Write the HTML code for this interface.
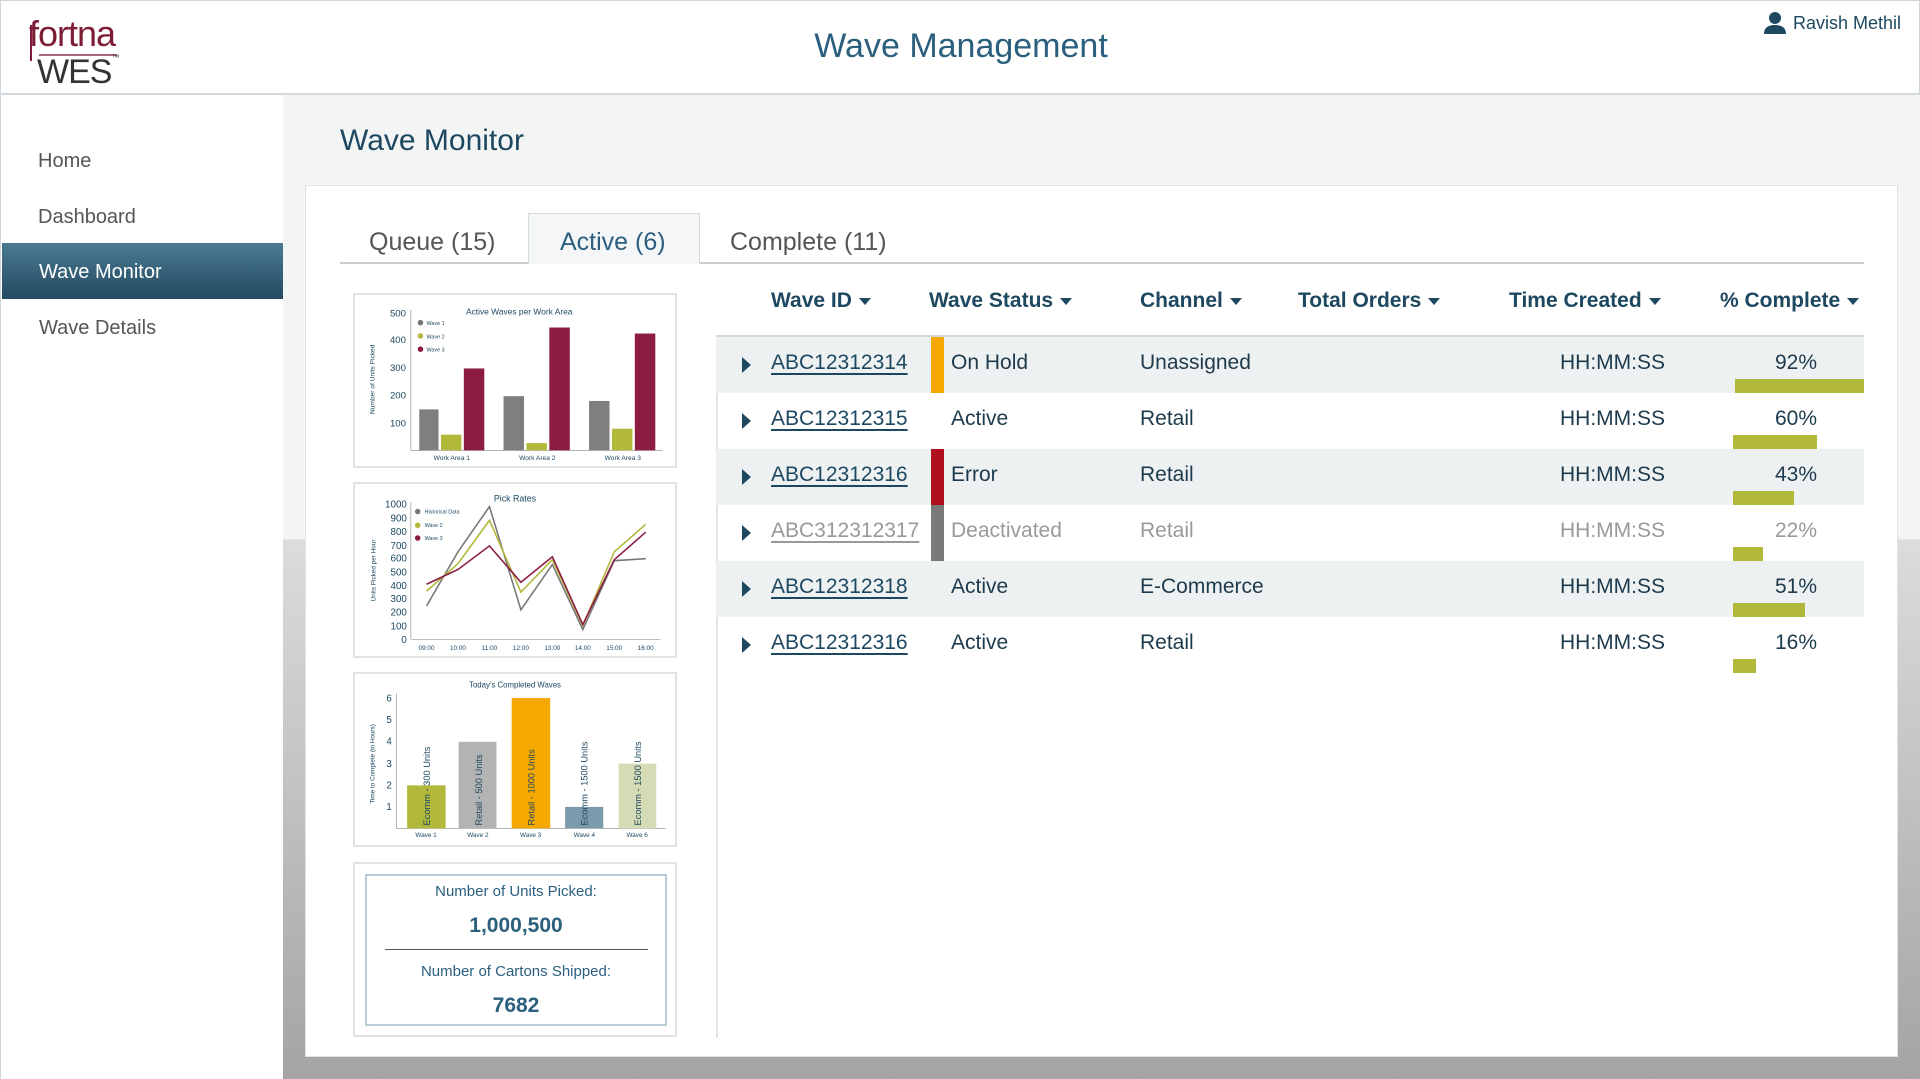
<!DOCTYPE html>
<html><head><meta charset="utf-8"><style>
*{margin:0;padding:0;box-sizing:border-box}
body{width:1920px;height:1079px;position:relative;overflow:hidden;font-family:"Liberation Sans",sans-serif;background:#fff}
.abs{position:absolute}
#header{left:0;top:0;width:1920px;height:95px;background:#fff;border:1px solid #d0d6da;border-bottom:2px solid #d3dadf}
#main{left:283px;top:95px;width:1637px;height:984px;background:linear-gradient(#f3f4f4 0,#f3f4f4 444px,#dcdcdc 445px,#a4a4a4 984px)}
#side{left:0;top:95px;width:283px;height:984px;background:#fff;border-left:1px solid #d0d6da}
.nav{position:absolute;left:37px;font-size:20px;color:#555}
#card{left:305px;top:185px;width:1593px;height:872px;background:#fff;border:1px solid #e0e4e6}
.tab{position:absolute;top:228px;font-size:25px;color:#555}
.th{position:absolute;top:289px;font-size:21px;font-weight:bold;color:#1d4860}
.th:after{content:"";display:inline-block;margin-left:7px;vertical-align:middle;border-left:6px solid transparent;border-right:6px solid transparent;border-top:7px solid #1d4860}
.row{position:absolute;left:716px;width:1148px;height:56px}
.c{position:absolute;font-size:21px;color:#1d3a4c;top:14px}
.id{text-decoration:underline;text-underline-offset:4px;color:#1d4860}
.arr{position:absolute;left:26px;top:20px;border-top:8px solid transparent;border-bottom:8px solid transparent;border-left:9px solid #1d4860}
.bar{position:absolute;background:#b2b839;height:14px;bottom:0}
.box{position:absolute;left:353px;width:324px;background:#fff;border:2px solid #dfe3e5}
svg text{font-family:"Liberation Sans",sans-serif}
</style></head><body>
<div id="header" class="abs">
 <div class="abs" style="left:28px;top:12px;font-size:36px;color:#7d1c34;letter-spacing:-1px">fortna</div>
 <div class="abs" style="left:38px;top:53px;width:78px;height:2px;background:#a5677a"></div>
 <div class="abs" style="left:36px;top:52px;font-size:34px;color:#333;letter-spacing:-1px">WES<span style="font-size:8px;vertical-align:top">™</span></div>
 <div class="abs" style="left:29px;top:24px;width:2px;height:36px;background:#7d1c34"></div>
 <div class="abs" style="left:0;width:1920px;top:26px;text-align:center;font-size:34px;color:#2b5f7e">Wave Management</div>
 <svg class="abs" style="left:1762px;top:10px" width="24" height="24" viewBox="0 0 24 24"><circle cx="12" cy="7" r="6" fill="#1d4860"/><path d="M1 23 Q1 14 12 14 Q23 14 23 23Z" fill="#1d4860"/></svg>
 <div class="abs" style="left:1792px;top:12px;font-size:18px;color:#1d4860">Ravish Methil</div>
</div>
<div id="main" class="abs"></div>
<div id="side" class="abs">
 <div class="nav" style="top:55px">Home</div>
 <div class="nav" style="top:111px">Dashboard</div>
 <div class="abs" style="left:1px;top:148px;width:281px;height:56px;background:linear-gradient(#4a7a92,#234a60)"></div>
 <div class="nav" style="top:166px;color:#fff;left:38px">Wave Monitor</div>
 <div class="nav" style="top:222px;left:38px">Wave Details</div>
</div>
<div class="abs" style="left:340px;top:124px;font-size:30px;color:#1d4860">Wave Monitor</div>
<div id="card" class="abs"></div>
<div class="abs" style="left:340px;top:262px;width:1524px;height:2px;background:#c9ced1"></div>
<div class="abs" style="left:528px;top:213px;width:172px;height:51px;background:#f4f6f7;border:1px solid #d6dbde;border-bottom:none"></div>
<div class="tab" style="left:369px">Queue (15)</div>
<div class="tab" style="left:560px;color:#2b5f7e">Active (6)</div>
<div class="tab" style="left:730px">Complete (11)</div>

<div class="box" style="top:293px;height:175px">
<svg width="320" height="171" viewBox="0 0 265 142">
<text x="136" y="16" font-size="7" fill="#1d4860" text-anchor="middle">Active Waves per Work Area</text>
<g font-size="8" fill="#1d4860" text-anchor="end"><text x="42" y="18">500</text><text x="42" y="40">400</text><text x="42" y="63">300</text><text x="42" y="86">200</text><text x="42" y="109">100</text></g>
<text transform="translate(16,70) rotate(-90)" font-size="5.5" fill="#1d4860" text-anchor="middle">Number of Units Picked</text>
<line x1="46" y1="12" x2="46" y2="129" stroke="#999" stroke-width=".6"/><line x1="46" y1="129" x2="255" y2="129" stroke="#999" stroke-width=".6"/>
<circle cx="54" cy="23" r="2.3" fill="#777"/><circle cx="54" cy="34" r="2.3" fill="#b2b839"/><circle cx="54" cy="45" r="2.3" fill="#8b1c42"/>
<g font-size="4.5" fill="#1d4860"><text x="59" y="25">Wave 1</text><text x="59" y="36">Wave 2</text><text x="59" y="47">Wave 3</text></g>
<g fill="#7f7f7f"><rect x="53" y="95" width="16" height="34"/><rect x="123" y="84" width="17" height="45"/><rect x="194" y="88" width="17" height="41"/></g>
<g fill="#b2b839"><rect x="71" y="116" width="17" height="13"/><rect x="142" y="123" width="17" height="6"/><rect x="213" y="111" width="17" height="18"/></g>
<g fill="#8b1c42"><rect x="90" y="61" width="17" height="68"/><rect x="161" y="27" width="17" height="102"/><rect x="232" y="32" width="17" height="97"/></g>
<g font-size="5.5" fill="#1d4860" text-anchor="middle"><text x="80" y="137">Work Area 1</text><text x="151" y="137">Work Area 2</text><text x="222" y="137">Work Area 3</text></g>
</svg></div>

<div class="box" style="top:482px;height:176px">
<svg width="320" height="172" viewBox="0 0 324 175">
<text x="162" y="18" font-size="9" fill="#1d4860" text-anchor="middle">Pick Rates</text>
<g font-size="10" fill="#1d4860" text-anchor="end"><text x="52" y="24">1000</text><text x="52" y="38">900</text><text x="52" y="52">800</text><text x="52" y="66">700</text><text x="52" y="79">600</text><text x="52" y="93">500</text><text x="52" y="107">400</text><text x="52" y="120">300</text><text x="52" y="134">200</text><text x="52" y="148">100</text><text x="52" y="162">0</text></g>
<text transform="translate(20,88) rotate(-90)" font-size="6.5" fill="#1d4860" text-anchor="middle">Units Picked per Hour</text>
<line x1="56" y1="18" x2="56" y2="158" stroke="#999" stroke-width=".7"/><line x1="56" y1="158" x2="310" y2="158" stroke="#999" stroke-width=".7"/>
<g font-size="6.5" fill="#1d4860" text-anchor="middle"><text x="72" y="169">09:00</text><text x="104" y="169">10:00</text><text x="136" y="169">11:00</text><text x="168" y="169">12:00</text><text x="200" y="169">13:00</text><text x="231" y="169">14:00</text><text x="263" y="169">15:00</text><text x="295" y="169">16:00</text></g>
<polyline fill="none" stroke="#777" stroke-width="1.6" points="72,124 104,69 136,23 168,128 200,82 231,148 263,78 295,76"/>
<polyline fill="none" stroke="#b2b839" stroke-width="1.6" points="72,109 104,81 136,37 168,110 200,77 231,144 263,69 295,41"/>
<polyline fill="none" stroke="#8b1c42" stroke-width="1.6" points="72,102 104,87 136,63 168,100 200,74 231,143 263,77 295,49"/>
<circle cx="63" cy="28" r="2.8" fill="#777"/><circle cx="63" cy="42" r="2.8" fill="#b2b839"/><circle cx="63" cy="55" r="2.8" fill="#8b1c42"/>
<g font-size="5.5" fill="#1d4860"><text x="70" y="30">Historical Data</text><text x="70" y="44">Wave 2</text><text x="70" y="57">Wave 3</text></g>
</svg></div>

<div class="box" style="top:672px;height:175px">
<svg width="320" height="171" viewBox="0 0 324 175">
<text x="162" y="14" font-size="8" fill="#1d4860" text-anchor="middle">Today’s Completed Waves</text>
<g font-size="10" fill="#1d4860" text-anchor="end"><text x="36" y="28">6</text><text x="36" y="50">5</text><text x="36" y="72">4</text><text x="36" y="95">3</text><text x="36" y="117">2</text><text x="36" y="139">1</text></g>
<text transform="translate(18,92) rotate(-90)" font-size="6.5" fill="#1d4860" text-anchor="middle">Time to Complete (in Hours)</text>
<line x1="40.6" y1="20" x2="40.6" y2="158" stroke="#999" stroke-width=".7"/><line x1="40.6" y1="158" x2="316" y2="158" stroke="#999" stroke-width=".7"/>
<rect x="51.6" y="114" width="39.4" height="44" fill="#b2b839"/>
<rect x="104.3" y="69.4" width="38.7" height="88.6" fill="#b3b3b3"/>
<rect x="158.6" y="24.6" width="39.4" height="133.4" fill="#f5a800"/>
<rect x="213.3" y="136" width="39" height="22" fill="#7b9aab"/>
<rect x="268" y="91.7" width="38.6" height="66.3" fill="#d5dbb5"/>
<g font-size="9.5" fill="#1d4860">
<text transform="translate(75,155) rotate(-90)">Ecomm - 300 Units</text>
<text transform="translate(128,155) rotate(-90)">Retail - 500 Units</text>
<text transform="translate(182,155) rotate(-90)">Retail - 1000 Units</text>
<text transform="translate(236,155) rotate(-90)">Ecomm - 1500 Units</text>
<text transform="translate(291,155) rotate(-90)">Ecomm - 1500 Units</text></g>
<g font-size="6.5" fill="#1d4860" text-anchor="middle"><text x="71" y="167">Wave 1</text><text x="124" y="167">Wave 2</text><text x="178" y="167">Wave 3</text><text x="233" y="167">Wave 4</text><text x="287" y="167">Wave 6</text></g>
</svg></div>

<div class="box" style="top:862px;height:175px">
 <div class="abs" style="left:10px;top:10px;width:302px;height:152px;border:2px solid #b6cdd9;text-align:center;color:#2b5f7e">
  <div style="font-size:15px;margin-top:7px">Number of Units Picked:</div>
  <div style="font-size:21px;font-weight:bold;margin-top:14px">1,000,500</div>
  <div style="width:263px;height:1px;background:#555;margin:11px auto 0"></div>
  <div style="font-size:15px;margin-top:13px">Number of Cartons Shipped:</div>
  <div style="font-size:21px;font-weight:bold;margin-top:14px">7682</div>
 </div>
</div>

<div class="abs" style="left:716px;top:337px;width:2px;height:701px;background:#dfe3e5"></div>
<div class="abs" style="left:716px;top:335px;width:1148px;height:2px;background:#d3d8db"></div>
<div class="th" style="left:771px">Wave ID</div>
<div class="th" style="left:929px">Wave Status</div>
<div class="th" style="left:1140px">Channel</div>
<div class="th" style="left:1298px">Total Orders</div>
<div class="th" style="left:1509px">Time Created</div>
<div class="th" style="left:1720px">% Complete</div>

<div class="row" style="top:337px;background:#eef1f2"><div class="arr"></div><div class="c id" style="left:55px">ABC12312314</div><div class="abs" style="left:215px;top:0;width:13px;height:56px;background:#f5a800"></div><div class="c" style="left:235px">On Hold</div><div class="c" style="left:424px">Unassigned</div><div class="c" style="right:199px">HH:MM:SS</div><div class="c" style="right:47px">92%</div><div class="bar" style="left:1019px;width:129px"></div></div>
<div class="row" style="top:393px"><div class="arr"></div><div class="c id" style="left:55px">ABC12312315</div><div class="c" style="left:235px">Active</div><div class="c" style="left:424px">Retail</div><div class="c" style="right:199px">HH:MM:SS</div><div class="c" style="right:47px">60%</div><div class="bar" style="left:1017px;width:84px"></div></div>
<div class="row" style="top:449px;background:#eef1f2"><div class="arr"></div><div class="c id" style="left:55px">ABC12312316</div><div class="abs" style="left:215px;top:0;width:13px;height:56px;background:#b0101e"></div><div class="c" style="left:235px">Error</div><div class="c" style="left:424px">Retail</div><div class="c" style="right:199px">HH:MM:SS</div><div class="c" style="right:47px">43%</div><div class="bar" style="left:1017px;width:61px"></div></div>
<div class="row" style="top:505px"><div class="arr"></div><div class="c id" style="left:55px;color:#999">ABC312312317</div><div class="abs" style="left:215px;top:0;width:13px;height:56px;background:#7a7a7a"></div><div class="c" style="left:235px;color:#999">Deactivated</div><div class="c" style="left:424px;color:#999">Retail</div><div class="c" style="right:199px;color:#999">HH:MM:SS</div><div class="c" style="right:47px;color:#999">22%</div><div class="bar" style="left:1017px;width:30px"></div></div>
<div class="row" style="top:561px;background:#eef1f2"><div class="arr"></div><div class="c id" style="left:55px">ABC12312318</div><div class="c" style="left:235px">Active</div><div class="c" style="left:424px">E-Commerce</div><div class="c" style="right:199px">HH:MM:SS</div><div class="c" style="right:47px">51%</div><div class="bar" style="left:1017px;width:72px"></div></div>
<div class="row" style="top:617px"><div class="arr"></div><div class="c id" style="left:55px">ABC12312316</div><div class="c" style="left:235px">Active</div><div class="c" style="left:424px">Retail</div><div class="c" style="right:199px">HH:MM:SS</div><div class="c" style="right:47px">16%</div><div class="bar" style="left:1017px;width:23px"></div></div>
</body></html>
